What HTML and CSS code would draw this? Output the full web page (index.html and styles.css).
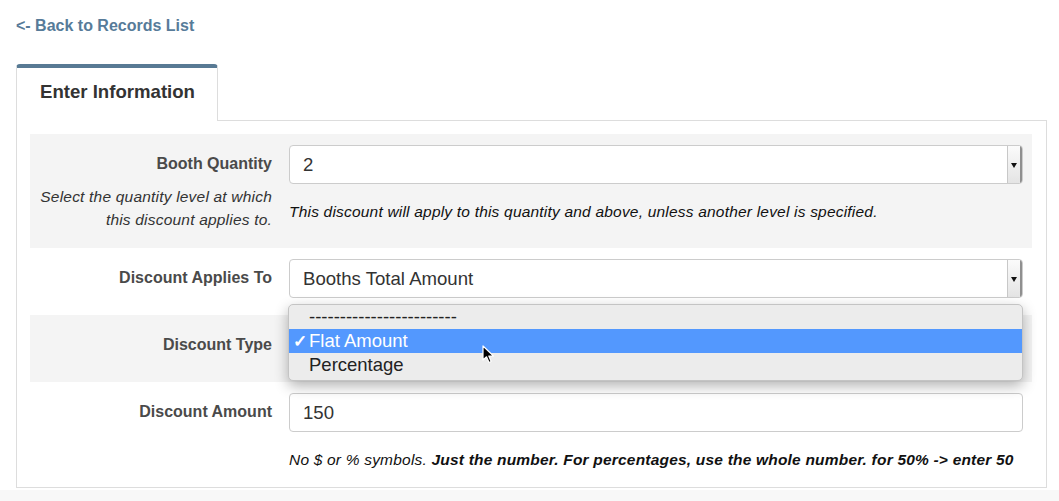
FILE: index.html
```html
<!DOCTYPE html>
<html lang="en">
<head>
    <meta charset="UTF-8">
    <meta name="viewport" content="width=device-width, initial-scale=1.0">
    <title>Enter Information</title>
    <link rel="stylesheet" href="styles.css">
</head>
<body>
    <div class="page">
        <a class="back-link" href="#">&lt;- Back to Records List</a>

        <div class="tabs">
            <div class="tab active">Enter Information</div>
        </div>

        <div class="panel">
            <div class="form-row shaded">
                <div class="label-col">
                    <label>Booth Quantity</label>
                    <div class="label-help">Select the quantity level at which this discount applies to.</div>
                </div>
                <div class="control-col">
                    <div class="select">
                        <span class="select-value">2</span>
                        <span class="select-btn"></span>
                    </div>
                    <div class="help-text">This discount will apply to this quantity and above, unless another level is specified.</div>
                </div>
            </div>

            <div class="form-row">
                <div class="label-col">
                    <label>Discount Applies To</label>
                </div>
                <div class="control-col">
                    <div class="select">
                        <span class="select-value">Booths Total Amount</span>
                        <span class="select-btn"></span>
                    </div>
                </div>
            </div>

            <div class="form-row shaded">
                <div class="label-col">
                    <label>Discount Type</label>
                </div>
                <div class="control-col">
                    <div class="select">
                        <span class="select-value">Flat Amount</span>
                        <span class="select-btn"></span>
                    </div>
                    <!-- open dropdown menu -->
                    <ul class="menu">
                        <li>------------------------</li>
                        <li class="selected"><span class="check">&#10003;</span>Flat Amount</li>
                        <li>Percentage</li>
                    </ul>
                    <svg class="cursor" width="14" height="20" viewBox="0 0 14 20">
                        <path d="M1 1 L1 15 L4.5 11.8 L7 17.5 L9.2 16.5 L6.8 11 L11.5 11 Z" fill="#000" stroke="#fff" stroke-width="1.2" stroke-linejoin="round"/>
                    </svg>
                </div>
            </div>

            <div class="form-row last">
                <div class="label-col">
                    <label>Discount Amount</label>
                </div>
                <div class="control-col">
                    <input class="text-input" type="text" value="150">
                    <div class="help-text">No $ or % symbols. <strong>Just the number. For percentages, use the whole number. for 50% -&gt; enter 50</strong></div>
                </div>
            </div>
        </div>
    </div>
</body>
</html>
```

FILE: styles.css
```css
* {
    margin: 0;
    padding: 0;
    box-sizing: border-box;
}

body {
    background-color: #f8f8f8;
    font-family: 'Liberation Sans', Arial, sans-serif;
    color: #333;
}

.page {
    background-color: #fff;
    padding: 16px 12px 2px 16px;
}

.back-link {
    display: block;
    color: #577b99;
    font-size: 16px;
    font-weight: bold;
    line-height: 20px;
    text-decoration: none;
    margin-bottom: 28px;
}

.tabs {
    display: flex;
}

.tab {
    width: 202px;
    height: 57px;
    padding: 13px 0 0 23px;
    background-color: #fff;
    border: 1px solid #ddd;
    border-top: 4px solid #587a94;
    border-bottom: none;
    border-radius: 4px 4px 0 0;
    font-size: 18.6px;
    font-weight: bold;
    color: #333;
    line-height: 22px;
    margin-bottom: -1px;
    position: relative;
    z-index: 1;
}

.panel {
    border: 1px solid #ddd;
    padding: 13px 14px 0 13px;
}

.form-row {
    display: grid;
    grid-template-columns: 259px 1fr;
    padding: 11px 9px 17px 0;
}

.form-row.shaded {
    background-color: #f4f4f4;
}

.label-col {
    text-align: right;
    padding-right: 17px;
}

.label-col label {
    display: block;
    margin-top: 9px;
    font-size: 16px;
    font-weight: bold;
    line-height: 20px;
    color: #4a4a4a;
}

.label-help {
    margin-top: 11px;
    font-size: 15.5px;
    letter-spacing: 0.2px;
    font-style: italic;
    line-height: 23px;
    color: #333;
}

.control-col {
    position: relative;
}

.select {
    display: flex;
    align-items: center;
    height: 39px;
    background-color: #fff;
    border: 1px solid #ccc;
    border-radius: 4px;
    overflow: hidden;
}

.select-value {
    flex: 1;
    padding-left: 13px;
    font-size: 18.6px;
    color: #333;
}

.select-btn {
    align-self: stretch;
    width: 15px;
    background: linear-gradient(#fbfbfb, #e4e4e4);
    border-left: 1px solid #c8c8c8;
    border-right: 2px solid #8f8f8f;
    position: relative;
}

.select-btn::after {
    content: "";
    position: absolute;
    left: 3px;
    top: 17px;
    border-left: 3.5px solid transparent;
    border-right: 3.5px solid transparent;
    border-top: 5px solid #111;
}

.help-text {
    margin-top: 18px;
    font-size: 15.5px;
    letter-spacing: 0.2px;
    font-style: italic;
    line-height: 20px;
    color: #111;
}

.help-text strong {
    font-weight: bold;
}

.text-input {
    display: block;
    width: 100%;
    height: 39px;
    border: 1px solid #ccc;
    border-radius: 4px;
    padding-left: 13px;
    font-family: inherit;
    font-size: 18.6px;
    color: #333;
    background-color: #fff;
}

.menu {
    position: absolute;
    top: -22px;
    left: -1px;
    width: 735px;
    list-style: none;
    background-color: #ececec;
    border: 1px solid #c4c4c4;
    border-radius: 5px;
    box-shadow: 0 5px 14px rgba(0, 0, 0, 0.3);
    padding: 0 0 3px;
    z-index: 5;
}

.menu li {
    height: 24px;
    line-height: 24px;
    padding-left: 20px;
    font-size: 18.5px;
    color: #222;
}

.menu li.selected {
    padding-left: 4px;
    background-color: #5398fe;
    color: #fff;
}

.menu .check {
    display: inline-block;
    width: 16px;
    font-size: 17px;
    font-weight: bold;
}

.cursor {
    position: absolute;
    left: 193px;
    top: 19px;
    z-index: 6;
}
```
